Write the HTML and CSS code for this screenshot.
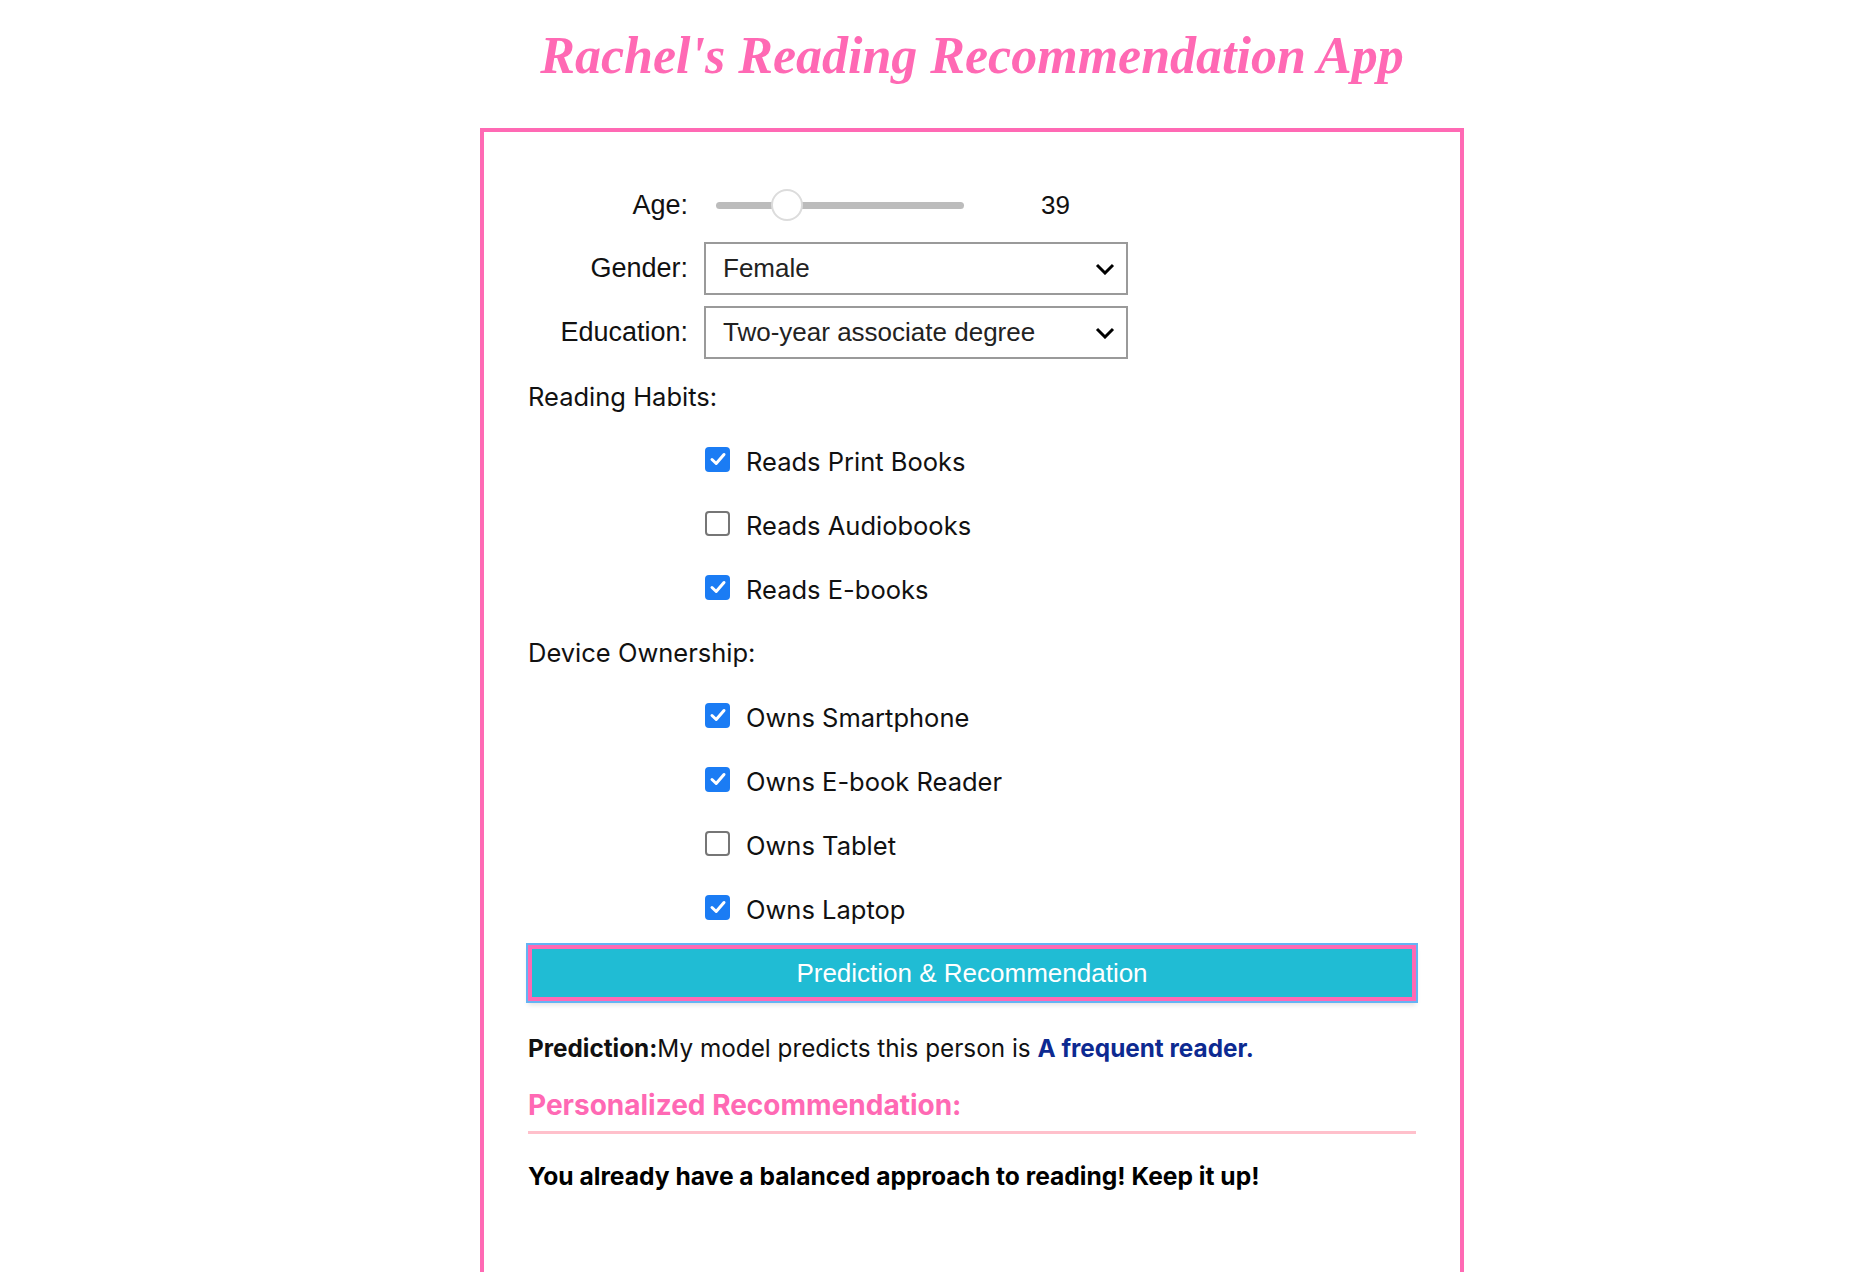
FILE: index.html
```html
<!DOCTYPE html>
<html lang="en">
<head>
<meta charset="utf-8">
<title>Rachel's Reading Recommendation App</title>
<link rel="stylesheet" href="styles.css">
</head>
<body>
<div class="page">
  <h1 class="title">Rachel's Reading Recommendation App</h1>
  <div class="card">
    <div class="field field-age">
      <label class="field-label">Age:</label>
      <div class="field-control">
        <input class="range" type="range" min="18" max="100" value="39">
        <span class="range-value">39</span>
      </div>
    </div>
    <div class="field">
      <label class="field-label">Gender:</label>
      <div class="select">
        <span class="select-text">Female</span>
        <svg class="chevron" viewBox="0 0 20 12" width="20" height="12"><path d="M2 2 L10 10 L18 2" fill="none" stroke="#000" stroke-width="3"/></svg>
      </div>
    </div>
    <div class="field">
      <label class="field-label">Education:</label>
      <div class="select">
        <span class="select-text">Two-year associate degree</span>
        <svg class="chevron" viewBox="0 0 20 12" width="20" height="12"><path d="M2 2 L10 10 L18 2" fill="none" stroke="#000" stroke-width="3"/></svg>
      </div>
    </div>

    <div class="section-label">Reading Habits:</div>
    <div class="checks">
      <div class="check"><span class="box on"><svg viewBox="0 0 24 24" width="24" height="24"><path d="M6 12.5 L10.2 16.5 L18 7.5" fill="none" stroke="#fff" stroke-width="3" stroke-linecap="round" stroke-linejoin="round"/></svg></span><span class="check-text">Reads Print Books</span></div>
      <div class="check"><span class="box"></span><span class="check-text">Reads Audiobooks</span></div>
      <div class="check"><span class="box on"><svg viewBox="0 0 24 24" width="24" height="24"><path d="M6 12.5 L10.2 16.5 L18 7.5" fill="none" stroke="#fff" stroke-width="3" stroke-linecap="round" stroke-linejoin="round"/></svg></span><span class="check-text">Reads E-books</span></div>
    </div>

    <div class="section-label">Device Ownership:</div>
    <div class="checks">
      <div class="check"><span class="box on"><svg viewBox="0 0 24 24" width="24" height="24"><path d="M6 12.5 L10.2 16.5 L18 7.5" fill="none" stroke="#fff" stroke-width="3" stroke-linecap="round" stroke-linejoin="round"/></svg></span><span class="check-text">Owns Smartphone</span></div>
      <div class="check"><span class="box on"><svg viewBox="0 0 24 24" width="24" height="24"><path d="M6 12.5 L10.2 16.5 L18 7.5" fill="none" stroke="#fff" stroke-width="3" stroke-linecap="round" stroke-linejoin="round"/></svg></span><span class="check-text">Owns E-book Reader</span></div>
      <div class="check"><span class="box"></span><span class="check-text">Owns Tablet</span></div>
      <div class="check"><span class="box on"><svg viewBox="0 0 24 24" width="24" height="24"><path d="M6 12.5 L10.2 16.5 L18 7.5" fill="none" stroke="#fff" stroke-width="3" stroke-linecap="round" stroke-linejoin="round"/></svg></span><span class="check-text">Owns Laptop</span></div>
    </div>

    <button class="predict-btn" type="button">Prediction &amp; Recommendation</button>

    <p class="prediction"><strong>Prediction:</strong>My model predicts this person is <span class="result">A frequent reader.</span></p>

    <h3 class="rec-title">Personalized Recommendation:</h3>
    <p class="rec-text">You already have a balanced approach to reading! Keep it up!</p>
  </div>
</div>
</body>
</html>
```

FILE: styles.css
```css
html, body {
  margin: 0;
  padding: 0;
  background: #fff;
}

.page {
  padding-left: 68px;
  display: flex;
  flex-direction: column;
  align-items: center;
  font-family: "Liberation Sans", Arial, sans-serif;
  color: #000;
}

.title {
  margin: 28px 0 44px;
  font-family: "Liberation Serif", "Times New Roman", serif;
  font-style: italic;
  font-weight: bold;
  font-size: 52px;
  line-height: 56px;
  color: #ff69b4;
}

.card {
  box-sizing: border-box;
  width: 984px;
  min-height: 1200px;
  border: 4px solid #ff69b4;
  border-bottom: none;
  padding: 53px 44px 0;
}

.field {
  display: grid;
  grid-template-columns: 160px 1fr;
  column-gap: 16px;
  align-items: center;
  margin-bottom: 11px;
}

.field-age {
  height: 40px;
  margin-bottom: 17px;
}

.field-label {
  text-align: right;
  font-size: 27px;
  color: #111;
}

.field-control {
  display: flex;
  align-items: center;
}

.range {
  -webkit-appearance: none;
  appearance: none;
  width: 248px;
  height: 34px;
  margin: 0 0 0 12px;
  padding: 0;
  background: transparent;
}

.range::-webkit-slider-runnable-track {
  height: 7px;
  border-radius: 4px;
  background: #bcbcbc;
}

.range::-webkit-slider-thumb {
  -webkit-appearance: none;
  appearance: none;
  box-sizing: border-box;
  width: 32px;
  height: 32px;
  margin-top: -12.5px;
  border-radius: 50%;
  background: #fff;
  border: 2px solid #dcdcdc;
}

.range-value {
  margin-left: 77px;
  font-size: 26px;
  color: #111;
}

.select {
  box-sizing: border-box;
  width: 424px;
  height: 53px;
  border: 2px solid #9a9a9a;
  display: flex;
  align-items: center;
  justify-content: space-between;
  padding: 0 11px 0 17px;
}

.select-text {
  font-size: 26px;
  color: #222;
}

.chevron {
  display: block;
}

.section-label {
  font-family: Inter, "Noto Sans", sans-serif;
  font-size: 25.5px;
  line-height: 30px;
  margin-top: 23px;
  color: #111;
}

.checks {
  display: flex;
  flex-direction: column;
  gap: 24px;
  margin: 29px 0 29px 177px;
}

.check {
  display: flex;
  align-items: center;
  height: 40px;
  gap: 16px;
}

.box {
  box-sizing: border-box;
  width: 25px;
  height: 25px;
  border-radius: 4px;
  border: 2px solid #767676;
  background: #fff;
  display: flex;
  align-items: center;
  justify-content: center;
  flex: none;
  position: relative;
  top: -2px;
}

.box.on {
  border: none;
  background: #1b7cf4;
}

.box svg {
  display: block;
}

.check-text {
  font-family: Inter, "Noto Sans", sans-serif;
  font-size: 25.5px;
  color: #111;
}

.predict-btn {
  display: block;
  box-sizing: border-box;
  width: 888px;
  height: 56px;
  margin: -13px 0 0;
  border: 4px solid #ff69b4;
  outline: 2px solid #64b3f4;
  background: #20bcd4;
  color: #fff;
  font-family: "Liberation Sans", Arial, sans-serif;
  font-size: 26px;
  box-shadow: 0 4px 5px rgba(0, 0, 0, 0.12);
  padding: 0;
}

.prediction {
  margin: 32px 0 0;
  font-family: Inter, "Noto Sans", sans-serif;
  font-size: 24.3px;
  line-height: 30px;
  color: #111;
}

.prediction strong {
  font-weight: 700;
}

.result {
  font-weight: 700;
  color: #0d2a91;
}

.rec-title {
  margin: 26px 0 0;
  padding-bottom: 10px;
  border-bottom: 3px solid #ffc0cb;
  font-family: Inter, "Noto Sans", sans-serif;
  font-size: 28px;
  line-height: 32px;
  font-weight: 700;
  color: #ff69b4;
}

.rec-text {
  margin: 27px 0 0;
  font-family: Inter, "Noto Sans", sans-serif;
  font-size: 24.6px;
  line-height: 30px;
  font-weight: 700;
  color: #000;
}
```
